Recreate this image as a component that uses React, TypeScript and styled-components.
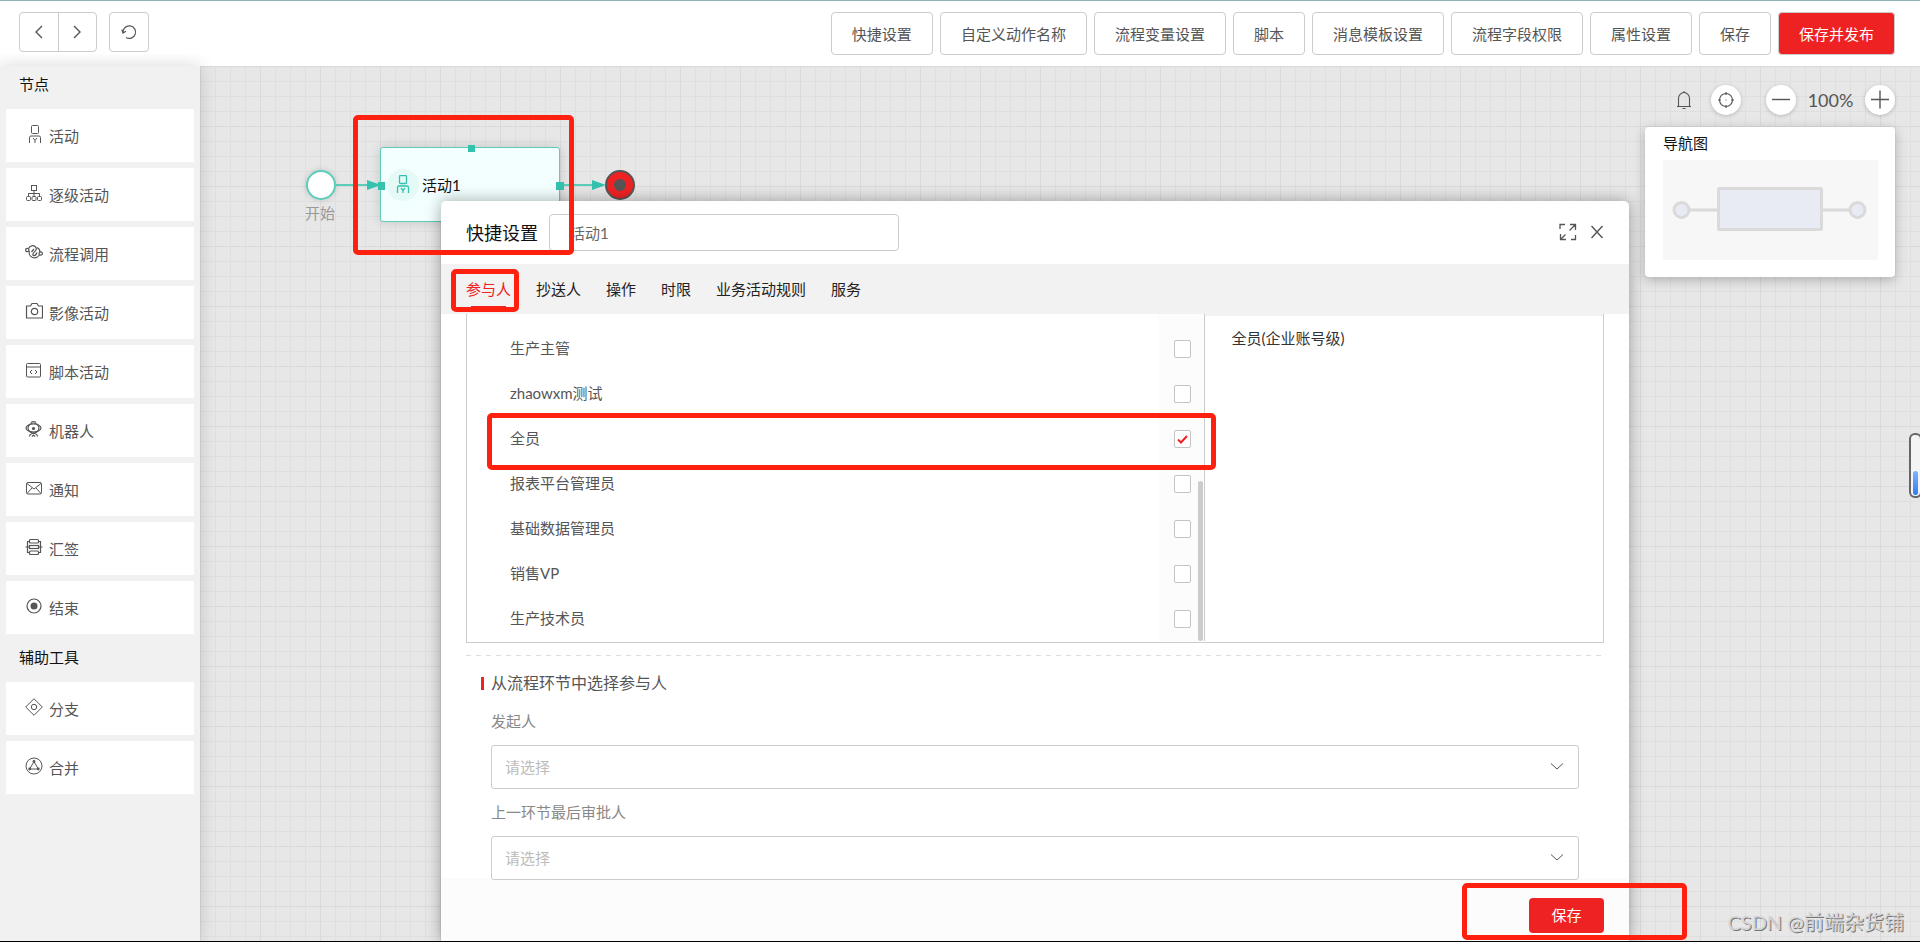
import React, { useState } from "react";
import styled, { createGlobalStyle, css } from "styled-components";

const red = "#ee2223";
const teal = "#5ccdb9";
const tealDark = "#33c2ae";

const GlobalStyle = createGlobalStyle`
  *, *::before, *::after { box-sizing: border-box; }
  body { margin: 0; }
  body, button, input, select {
    font-family: Lato, "Noto Sans CJK SC", sans-serif;
    font-size: 15px;
    color: #555;
  }
  button { padding: 0; cursor: pointer; }
`;

const Page = styled.div`
  display: flex;
  flex-direction: column;
  height: 100vh;
  min-height: 800px;
  overflow: hidden;
  position: relative;
  border-top: 1px solid #8fb4b6;
  border-bottom: 1px solid #000;
`;

/* ---------- top bar ---------- */

const TopBar = styled.header`
  display: flex;
  justify-content: space-between;
  align-items: flex-start;
  height: 65px;
  flex: none;
  padding: 11px 25px 0 19px;
  background: #fff;
`;

const History = styled.div`
  display: flex;
  gap: 12px;
`;

const IconGroup = styled.div`
  display: flex;
  height: 40px;
  border: 1px solid #ccc;
  border-radius: 4px;
`;

const IconButton = styled.button`
  display: flex;
  align-items: center;
  justify-content: center;
  width: 38px;
  border: 0;
  background: none;
  & + & {
    border-left: 1px solid #ccc;
  }
`;

const Actions = styled.div`
  display: flex;
  gap: 7px;
`;

const ActionButton = styled.button<{ $primary?: boolean }>`
  height: 43px;
  padding: 0 20px;
  border: 1px solid #ccc;
  border-radius: 4px;
  background: ${(p) => (p.$primary ? red : "#fff")};
  color: ${(p) => (p.$primary ? "#fff" : "#555")};
  white-space: nowrap;
`;

/* ---------- sidebar ---------- */

const Workspace = styled.div`
  display: flex;
  flex: 1;
  min-height: 0;
`;

const Sidebar = styled.aside`
  position: relative;
  z-index: 1;
  width: 200px;
  flex: none;
  background: #f1f1f1;
  box-shadow: 0 0 16px rgba(0, 0, 0, 0.16);
  clip-path: inset(-12px -20px 0 0);
`;

const Group = styled.section`
  & + & {
    margin-top: 5px;
  }
`;

const GroupTitle = styled.h2`
  margin: 0;
  padding: 0 19px 7px;
  font-size: 15px;
  font-weight: 400;
  line-height: 36px;
  color: #111;
`;

const NodeList = styled.div`
  display: flex;
  flex-direction: column;
  gap: 6px;
  padding: 0 6px;
`;

const NodeButton = styled.button`
  display: flex;
  align-items: center;
  gap: 6px;
  height: 53px;
  padding: 0 19px;
  border: 0;
  background: #fff;
  svg {
    margin-bottom: 3px;
  }
`;

/* ---------- canvas ---------- */

const Canvas = styled.main`
  position: relative;
  flex: 1;
  background-color: #e7e7e7;
  background-image: linear-gradient(#dadada 1px, transparent 1px),
    linear-gradient(90deg, #dadada 1px, transparent 1px),
    linear-gradient(#dfdfdf 1px, transparent 1px),
    linear-gradient(90deg, #dfdfdf 1px, transparent 1px);
  background-size: 60px 60px, 60px 60px, 15px 15px, 15px 15px;
`;

const Links = styled.svg`
  position: absolute;
  left: 0;
  top: 0;
`;

const StartNode = styled.div`
  position: absolute;
  left: 106px;
  top: 104px;
  width: 30px;
  height: 30px;
  border: 2px solid ${teal};
  border-radius: 50%;
  background: #fff;
  box-shadow: 0 0 6px rgba(0, 0, 0, 0.15);
`;

const StartLabel = styled.span`
  position: absolute;
  left: 105px;
  top: 136px;
  line-height: 22px;
  color: #999;
`;

const EndNode = styled.div`
  position: absolute;
  left: 405px;
  top: 104px;
  display: flex;
  align-items: center;
  justify-content: center;
  width: 30px;
  height: 30px;
  border: 2px solid #555;
  border-radius: 50%;
  background: ${red};
  &::after {
    content: "";
    width: 12px;
    height: 12px;
    border-radius: 50%;
    background: #555;
  }
`;

const ActivityNode = styled.div`
  position: absolute;
  left: 180px;
  top: 81px;
  display: flex;
  align-items: center;
  gap: 3px;
  width: 180px;
  height: 75px;
  padding-left: 6px;
  border: 1px solid ${teal};
  border-radius: 3px;
  background: #f2fffe;
  color: #111;
  box-shadow: 0 0 12px rgba(0, 0, 0, 0.15);
`;

const NodeIcon = styled.span`
  display: flex;
  align-items: center;
  justify-content: center;
  width: 32px;
  height: 32px;
  border-radius: 50%;
  background: #e5faf7;
  color: ${tealDark};
`;

/* ---------- canvas controls ---------- */

const Controls = styled.div`
  position: absolute;
  top: 19px;
  right: 25px;
  display: flex;
  flex-direction: column;
  align-items: flex-end;
  gap: 12px;
`;

const ZoomBar = styled.div`
  display: flex;
  align-items: center;
  height: 30px;
`;

const PlainButton = styled.button`
  display: flex;
  border: 0;
  background: none;
  margin-right: 17px;
`;

const RoundButton = styled.button<{ $apart?: boolean }>`
  display: flex;
  align-items: center;
  justify-content: center;
  width: 30px;
  height: 30px;
  margin-right: ${(p) => (p.$apart ? "25px" : "0")};
  border: 0;
  border-radius: 50%;
  background: #fff;
  box-shadow: 0 1px 4px rgba(0, 0, 0, 0.2);
`;

const ZoomValue = styled.output`
  width: 69px;
  font-size: 18px;
  text-align: center;
`;

const NavCard = styled.section`
  width: 250px;
  height: 150px;
  padding: 5px 17px 0 18px;
  border-radius: 4px;
  background: #fff;
  box-shadow: 0 3px 12px rgba(0, 0, 0, 0.25);
`;

const NavTitle = styled.h2`
  margin: 0 0 6px;
  font-size: 15px;
  font-weight: 400;
  line-height: 22px;
  color: #111;
`;

const MiniMap = styled.svg`
  display: block;
  width: 215px;
  height: 100px;
  background: #f7f7f7;
`;

/* ---------- settings dialog ---------- */

const Dialog = styled.section`
  position: absolute;
  left: 241px;
  right: 291px;
  top: 135px;
  bottom: 0;
  display: flex;
  flex-direction: column;
  border-radius: 5px 5px 0 0;
  background: #fff;
  box-shadow: 0 0 16px rgba(0, 0, 0, 0.35);
`;

const DialogHeader = styled.header`
  display: flex;
  align-items: center;
  height: 63px;
  flex: none;
  padding: 0 25px;
`;

const DialogTitle = styled.h1`
  margin: 0 11px 0 0;
  padding-bottom: 2px;
  font-size: 18px;
  font-weight: 400;
  color: #111;
`;

const NameInput = styled.input`
  width: 350px;
  height: 37px;
  padding: 0 20px;
  border: 1px solid #ccc;
  border-radius: 4px;
  color: #666;
  outline: 0;
`;

const WindowButtons = styled.div`
  display: flex;
  align-items: center;
  gap: 13px;
  margin-left: auto;
  padding-bottom: 2px;
  button {
    display: flex;
    border: 0;
    background: none;
  }
`;

const Tabs = styled.nav`
  display: flex;
  gap: 25px;
  height: 50px;
  flex: none;
  padding: 0 25px;
  background: #f2f2f2;
`;

const Tab = styled.button<{ $active?: boolean }>`
  position: relative;
  padding-bottom: 2px;
  border: 0;
  background: none;
  color: ${(p) => (p.$active ? red : "#222")};
  ${(p) =>
    p.$active &&
    css`
      &::after {
        content: "";
        position: absolute;
        left: 5px;
        right: 5px;
        bottom: 6px;
        height: 2px;
        background: ${red};
      }
    `}
`;

const DialogBody = styled.div`
  flex: 1;
  min-height: 0;
  overflow: hidden;
  padding: 0 25px;
`;

const Picker = styled.div`
  display: grid;
  grid-template-columns: 13fr 7fr;
  height: 329px;
  padding-bottom: 1px;
  border: 1px solid #ccc;
  border-top: 0;
`;

const RolePane = styled.div`
  position: relative;
  padding-top: 12px;
  border-right: 1px solid #ccc;
  background: linear-gradient(#fcfcfc, #fcfcfc) right / 45px 100% no-repeat;
`;

const RoleRow = styled.label`
  display: flex;
  align-items: center;
  justify-content: space-between;
  height: 45px;
  padding: 0 13px 0 43px;
`;

const RoleName = styled.span`
  padding-bottom: 2px;
`;

const CheckWrap = styled.span`
  position: relative;
  display: flex;
  svg {
    position: absolute;
    left: 3px;
    top: 5px;
    pointer-events: none;
  }
`;

const CheckInput = styled.input`
  appearance: none;
  width: 17px;
  height: 18px;
  margin: 0;
  border: 1px solid #c4c4c4;
  border-radius: 2px;
  background: #fff;
`;

const ScrollThumb = styled.i`
  position: absolute;
  right: 1px;
  bottom: 0;
  width: 5px;
  height: 160px;
  border-radius: 3px;
  background: #ccc;
`;

const ChosenPane = styled.div`
  padding: 11px 26px;
  border-top: 2px solid #f2f2f2;
  line-height: 22px;
  color: #333;
`;

const Dashes = styled.hr`
  height: 1px;
  margin: 12px 0 15px;
  border: 0;
  background: repeating-linear-gradient(90deg, #ddd 0 5px, transparent 5px 10px);
`;

const FieldSet = styled.div`
  padding: 0 25px;
`;

const SectionTitle = styled.h2`
  display: flex;
  align-items: center;
  gap: 7px;
  margin: 0 0 15px -10px;
  font-size: 16px;
  font-weight: 400;
  line-height: 24px;
  &::before {
    content: "";
    width: 3px;
    height: 13px;
    background: ${red};
  }
`;

const FieldLabel = styled.label`
  display: block;
  margin-bottom: 13px;
  line-height: 22px;
  color: #888;
`;

const SelectWrap = styled.div`
  position: relative;
  margin-bottom: 12px;
  svg {
    position: absolute;
    right: 15px;
    top: 17px;
    pointer-events: none;
  }
`;

const Select = styled.select`
  display: block;
  appearance: none;
  width: 100%;
  height: 44px;
  padding: 0 13px;
  border: 1px solid #ccc;
  border-radius: 3px;
  background: #fff;
  color: #bbb;
`;

const DialogFooter = styled.footer`
  display: flex;
  justify-content: flex-end;
  height: 61px;
  flex: none;
  padding: 18px 25px 0;
  background: #fcfcfc;
  box-shadow: 0 0 4px rgba(0, 0, 0, 0.05);
`;

const SaveButton = styled.button`
  width: 75px;
  height: 35px;
  padding-bottom: 2px;
  border: 0;
  border-radius: 4px;
  background: ${red};
  color: #fff;
`;

/* ---------- overlays ---------- */

const Mark = styled.div<{ $x: number; $y: number; $w: number; $h: number }>`
  position: absolute;
  left: ${(p) => p.$x}px;
  top: ${(p) => p.$y}px;
  width: ${(p) => p.$w}px;
  height: ${(p) => p.$h}px;
  border: 5px solid #ff2010;
  border-radius: 5px;
  pointer-events: none;
`;

const Gauge = styled.div`
  position: absolute;
  right: -2px;
  top: 432px;
  width: 13px;
  height: 65px;
  padding: 36px 2px 1px;
  border: 2px solid #666;
  border-radius: 6px;
  background: #f4f4f4;
  &::after {
    content: "";
    display: block;
    height: 100%;
    border-radius: 3px;
    background: linear-gradient(#7db4ff, #2f7df6);
  }
`;

const Watermark = styled.div`
  position: absolute;
  right: 16px;
  bottom: 5px;
  font-size: 20px;
  line-height: 28px;
  color: #d4d4d4;
  text-shadow: 1px 1px 0 #777;
`;

/* ---------- icons ---------- */

type IconProps = { size?: number; width?: number; children: React.ReactNode };

const Icon = ({ size = 18, width = 1, children }: IconProps) => (
  <svg
    width={size}
    height={size}
    viewBox={`0 0 ${size} ${size}`}
    fill="none"
    stroke="currentColor"
    strokeWidth={width}
    aria-hidden="true"
  >
    {children}
  </svg>
);

const PersonShape = () => (
  <>
    <rect x="6.5" y="0.5" width="7" height="8" rx="1" />
    <path d="M4.5 18v-5.5q0-1.500 1.500-1.500h8q1.500 0 1.500 1.500V18M8 13l2 2.500 2-2.500M10 15.500V18" />
  </>
);

const icons: Record<string, React.ReactNode> = {
  person: <PersonShape />,
  tree: (
    <>
      <rect x="6.500" y="1.500" width="5" height="5" />
      <path d="M9 6.500v6M3.500 12.500V9.500h11v3" />
      <rect x="1.500" y="12.500" width="4" height="4" rx="1" />
      <rect x="7" y="12.500" width="4" height="4" rx="1" />
      <rect x="12.500" y="12.500" width="4" height="4" rx="1" />
    </>
  ),
  flow: (
    <g strokeWidth="1.200">
      <circle cx="2.300" cy="7" r="1.700" />
      <circle cx="15.700" cy="10.500" r="1.700" />
      <path d="M3.500 5.500C5 2.500 8.500 1.800 10.500 4c1.500 1.600.700 3.200-.800 4.600S7 12 8.500 12.500s3-1.500 3.500-3" />
      <path d="M4.500 8c-.8 2.500.2 5.500 3 6.500 3 1 5.500-.5 7-2.500M6.500 9l2.500-3M12 4.500c2 1 3 2.500 3 4.500" />
    </g>
  ),
  camera: (
    <g strokeWidth="1.200">
      <path d="M1.500 4h4l1.500-2.500h5L13.500 4h4v12h-16z" />
      <circle cx="9.500" cy="9.500" r="3.200" />
    </g>
  ),
  script: (
    <>
      <rect x="1.500" y="2.500" width="14" height="13.500" rx="1" />
      <path d="M1.500 6h14M7 9l-2 2 2 2M10 9l2 2-2 2" />
    </>
  ),
  robot: (
    <g strokeWidth="1.200">
      <ellipse cx="8.500" cy="8" rx="5.500" ry="5" />
      <ellipse cx="8.500" cy="8" rx="7.500" ry="4" />
      <circle cx="8.500" cy="8.500" r="1" fill="currentColor" />
      <path d="M6 2.500q2.500-2 5 0M6.500 13.500h4M4.500 16.500q0-2 2-2.500M12.500 16.500q0-2-2-2.500M7 16.500l1.500-1.500 1.500 1.500" />
    </g>
  ),
  mail: (
    <>
      <rect x="1.500" y="3.500" width="15" height="11.500" rx="1.500" />
      <path d="M2 4.500l7 5.500 7-5.500M2 14.500l5-5.500M16 14.500l-5-5.500" />
    </>
  ),
  sign: (
    <g strokeWidth="1.200">
      <rect x="4.500" y="1.500" width="9" height="3.500" rx="1" />
      <rect x="4.500" y="7.500" width="9" height="3" />
      <rect x="4.500" y="13" width="9" height="3.500" rx="1" />
      <path d="M4.500 3.500h-2v11h2M13.500 3.500h2v11h-2M.500 9h4M13.500 9h4" />
    </g>
  ),
  end: (
    <>
      <circle cx="9" cy="9" r="7" strokeWidth="1.200" />
      <circle cx="9" cy="9" r="3.500" fill="currentColor" stroke="none" />
    </>
  ),
  branch: (
    <>
      <path d="M9 .700L17.300 9 9 17.300.700 9z" />
      <circle cx="9" cy="9" r="2.700" />
    </>
  ),
  merge: (
    <>
      <circle cx="9" cy="9" r="8" />
      <path d="M9 4.500L4.700 12h8.600z" />
      <g fill="currentColor" stroke="none">
        <circle cx="9" cy="4.500" r="1.400" />
        <circle cx="4.700" cy="12" r="1.400" />
        <circle cx="13.300" cy="12" r="1.400" />
      </g>
    </>
  ),
};

const Chevron = () => (
  <svg width="14" height="10" viewBox="0 0 14 10" fill="none" stroke="#555" aria-hidden="true">
    <path d="M1 1.500L7 7l6-5.500" />
  </svg>
);

/* ---------- data ---------- */

const actions = [
  "快捷设置",
  "自定义动作名称",
  "流程变量设置",
  "脚本",
  "消息模板设置",
  "流程字段权限",
  "属性设置",
  "保存",
];

const groups = [
  {
    title: "节点",
    items: [
      ["person", "活动"],
      ["tree", "逐级活动"],
      ["flow", "流程调用"],
      ["camera", "影像活动"],
      ["script", "脚本活动"],
      ["robot", "机器人"],
      ["mail", "通知"],
      ["sign", "汇签"],
      ["end", "结束"],
    ],
  },
  {
    title: "辅助工具",
    items: [
      ["branch", "分支"],
      ["merge", "合并"],
    ],
  },
];

const tabs = ["参与人", "抄送人", "操作", "时限", "业务活动规则", "服务"];

const roles = [
  "生产主管",
  "zhaowxm测试",
  "全员",
  "报表平台管理员",
  "基础数据管理员",
  "销售VP",
  "生产技术员",
];

const fields = [
  ["initiator", "发起人"],
  ["approver", "上一环节最后审批人"],
];

export default function App() {
  const [tab, setTab] = useState(tabs[0]);
  const [checked, setChecked] = useState<string[]>(["全员"]);
  const toggle = (role: string) =>
    setChecked((list) =>
      list.includes(role) ? list.filter((r) => r !== role) : [...list, role]
    );

  return (
    <Page>
      <GlobalStyle />
      <TopBar>
        <History>
          <IconGroup>
            <IconButton aria-label="后退">
              <Icon size={16} width={1.4}>
                <path d="M11 2L5 8l6 6" />
              </Icon>
            </IconButton>
            <IconButton aria-label="前进">
              <Icon size={16} width={1.4}>
                <path d="M4 2l6 6-6 6" />
              </Icon>
            </IconButton>
          </IconGroup>
          <IconGroup>
            <IconButton aria-label="重置">
              <Icon size={16} width={1.2}>
                <path d="M2 8.500A6.300 6.300 0 1 1 5 13.500M.800 5.500L2 9l3-1.800" />
              </Icon>
            </IconButton>
          </IconGroup>
        </History>
        <Actions>
          {actions.map((name) => (
            <ActionButton key={name}>{name}</ActionButton>
          ))}
          <ActionButton $primary>保存并发布</ActionButton>
        </Actions>
      </TopBar>

      <Workspace>
        <Sidebar>
          {groups.map((group) => (
            <Group key={group.title}>
              <GroupTitle>{group.title}</GroupTitle>
              <NodeList>
                {group.items.map(([icon, name]) => (
                  <NodeButton key={name}>
                    <Icon>{icons[icon]}</Icon>
                    {name}
                  </NodeButton>
                ))}
              </NodeList>
            </Group>
          ))}
        </Sidebar>

        <Canvas>
          <StartNode />
          <StartLabel>开始</StartLabel>
          <ActivityNode>
            <NodeIcon>
              <Icon size={20} width={1.3}>
                <PersonShape />
              </Icon>
            </NodeIcon>
            活动1
          </ActivityNode>
          <EndNode />
          <Links width="440" height="160" viewBox="0 0 440 160" aria-hidden="true">
            <path d="M135 119h34M364 119h30" stroke={teal} strokeWidth="2" />
            <path d="M167 114l14 5-14 5zM392 114l14 5-14 5z" fill={tealDark} />
            <path d="M178 116h7v8h-7zM356 116h8v8h-8zM268 79h7v7h-7z" fill={tealDark} />
          </Links>

          <Controls>
            <ZoomBar>
              <PlainButton aria-label="提醒">
                <Icon size={20} width={1.1}>
                  <path d="M3 16.500h14M4.500 16V8.500a5.500 6 0 0 1 11 0V16M8.500 18.500h3M9 2h2" />
                </Icon>
              </PlainButton>
              <RoundButton $apart aria-label="定位">
                <Icon size={18} width={1.1}>
                  <circle cx="9" cy="9" r="6.500" />
                  <path d="M9 1v3M9 14v3M1 9h3M14 9h3M8.500 9h1" />
                </Icon>
              </RoundButton>
              <RoundButton aria-label="缩小">
                <Icon size={20} width={1.4}>
                  <path d="M1 9.500h18" />
                </Icon>
              </RoundButton>
              <ZoomValue>100%</ZoomValue>
              <RoundButton aria-label="放大">
                <Icon size={20} width={1.4}>
                  <path d="M1 9.500h18M10 .500v18" />
                </Icon>
              </RoundButton>
            </ZoomBar>
            <NavCard>
              <NavTitle>导航图</NavTitle>
              <MiniMap viewBox="0 0 215 100" fill="#e8ebf4" stroke="#dadada">
                <path d="M26 50h30M159 50h28" strokeWidth="3" />
                <circle cx="18.500" cy="50" r="7.500" strokeWidth="3" />
                <circle cx="194.500" cy="50" r="7.500" strokeWidth="3" />
                <rect x="55.500" y="28.500" width="103" height="41" rx="1" strokeWidth="3" />
              </MiniMap>
            </NavCard>
          </Controls>

          <Dialog role="dialog" aria-label="快捷设置">
            <DialogHeader>
              <DialogTitle>快捷设置</DialogTitle>
              <NameInput aria-label="名称" defaultValue="活动1" />
              <WindowButtons>
                <button aria-label="全屏">
                  <Icon size={18} width={1.3}>
                    <path d="M1 6V1.500h5M12 16.500h4.500V12M11 1.500h5.500V7M16.500 1.500l-6 6M1.500 11v5.500h5.500M1.500 16.500l5-5" />
                  </Icon>
                </button>
                <button aria-label="关闭">
                  <Icon size={14} width={1.4}>
                    <path d="M1.500 1l11 12M12.500 1l-11 12" />
                  </Icon>
                </button>
              </WindowButtons>
            </DialogHeader>
            <Tabs>
              {tabs.map((name) => (
                <Tab key={name} $active={name === tab} onClick={() => setTab(name)}>
                  {name}
                </Tab>
              ))}
            </Tabs>
            <DialogBody>
              <Picker>
                <RolePane>
                  {roles.map((role) => (
                    <RoleRow key={role}>
                      <RoleName>{role}</RoleName>
                      <CheckWrap>
                        <CheckInput
                          type="checkbox"
                          checked={checked.includes(role)}
                          onChange={() => toggle(role)}
                        />
                        {checked.includes(role) && (
                          <svg width="11" height="9" viewBox="0 0 11 9" fill="none" stroke={red} strokeWidth="2">
                            <path d="M1 4.500L4 7.500 10 1" />
                          </svg>
                        )}
                      </CheckWrap>
                    </RoleRow>
                  ))}
                  <ScrollThumb />
                </RolePane>
                <ChosenPane>
                  {checked.map((role) => (
                    <div key={role}>{role}(企业账号级)</div>
                  ))}
                </ChosenPane>
              </Picker>
              <Dashes />
              <FieldSet>
                <SectionTitle>从流程环节中选择参与人</SectionTitle>
                {fields.map(([id, label]) => (
                  <React.Fragment key={id}>
                    <FieldLabel htmlFor={id}>{label}</FieldLabel>
                    <SelectWrap>
                      <Select id={id}>
                        <option>请选择</option>
                      </Select>
                      <Chevron />
                    </SelectWrap>
                  </React.Fragment>
                ))}
              </FieldSet>
            </DialogBody>
            <DialogFooter>
              <SaveButton>保存</SaveButton>
            </DialogFooter>
          </Dialog>
        </Canvas>
      </Workspace>

      <Mark $x={353} $y={114} $w={221} $h={140} />
      <Mark $x={451} $y={268} $w={68} $h={43} />
      <Mark $x={487} $y={412} $w={729} $h={57} />
      <Mark $x={1462} $y={882} $w={225} $h={57} />
      <Gauge />
      <Watermark>CSDN @前端杂货铺</Watermark>
    </Page>
  );
}
